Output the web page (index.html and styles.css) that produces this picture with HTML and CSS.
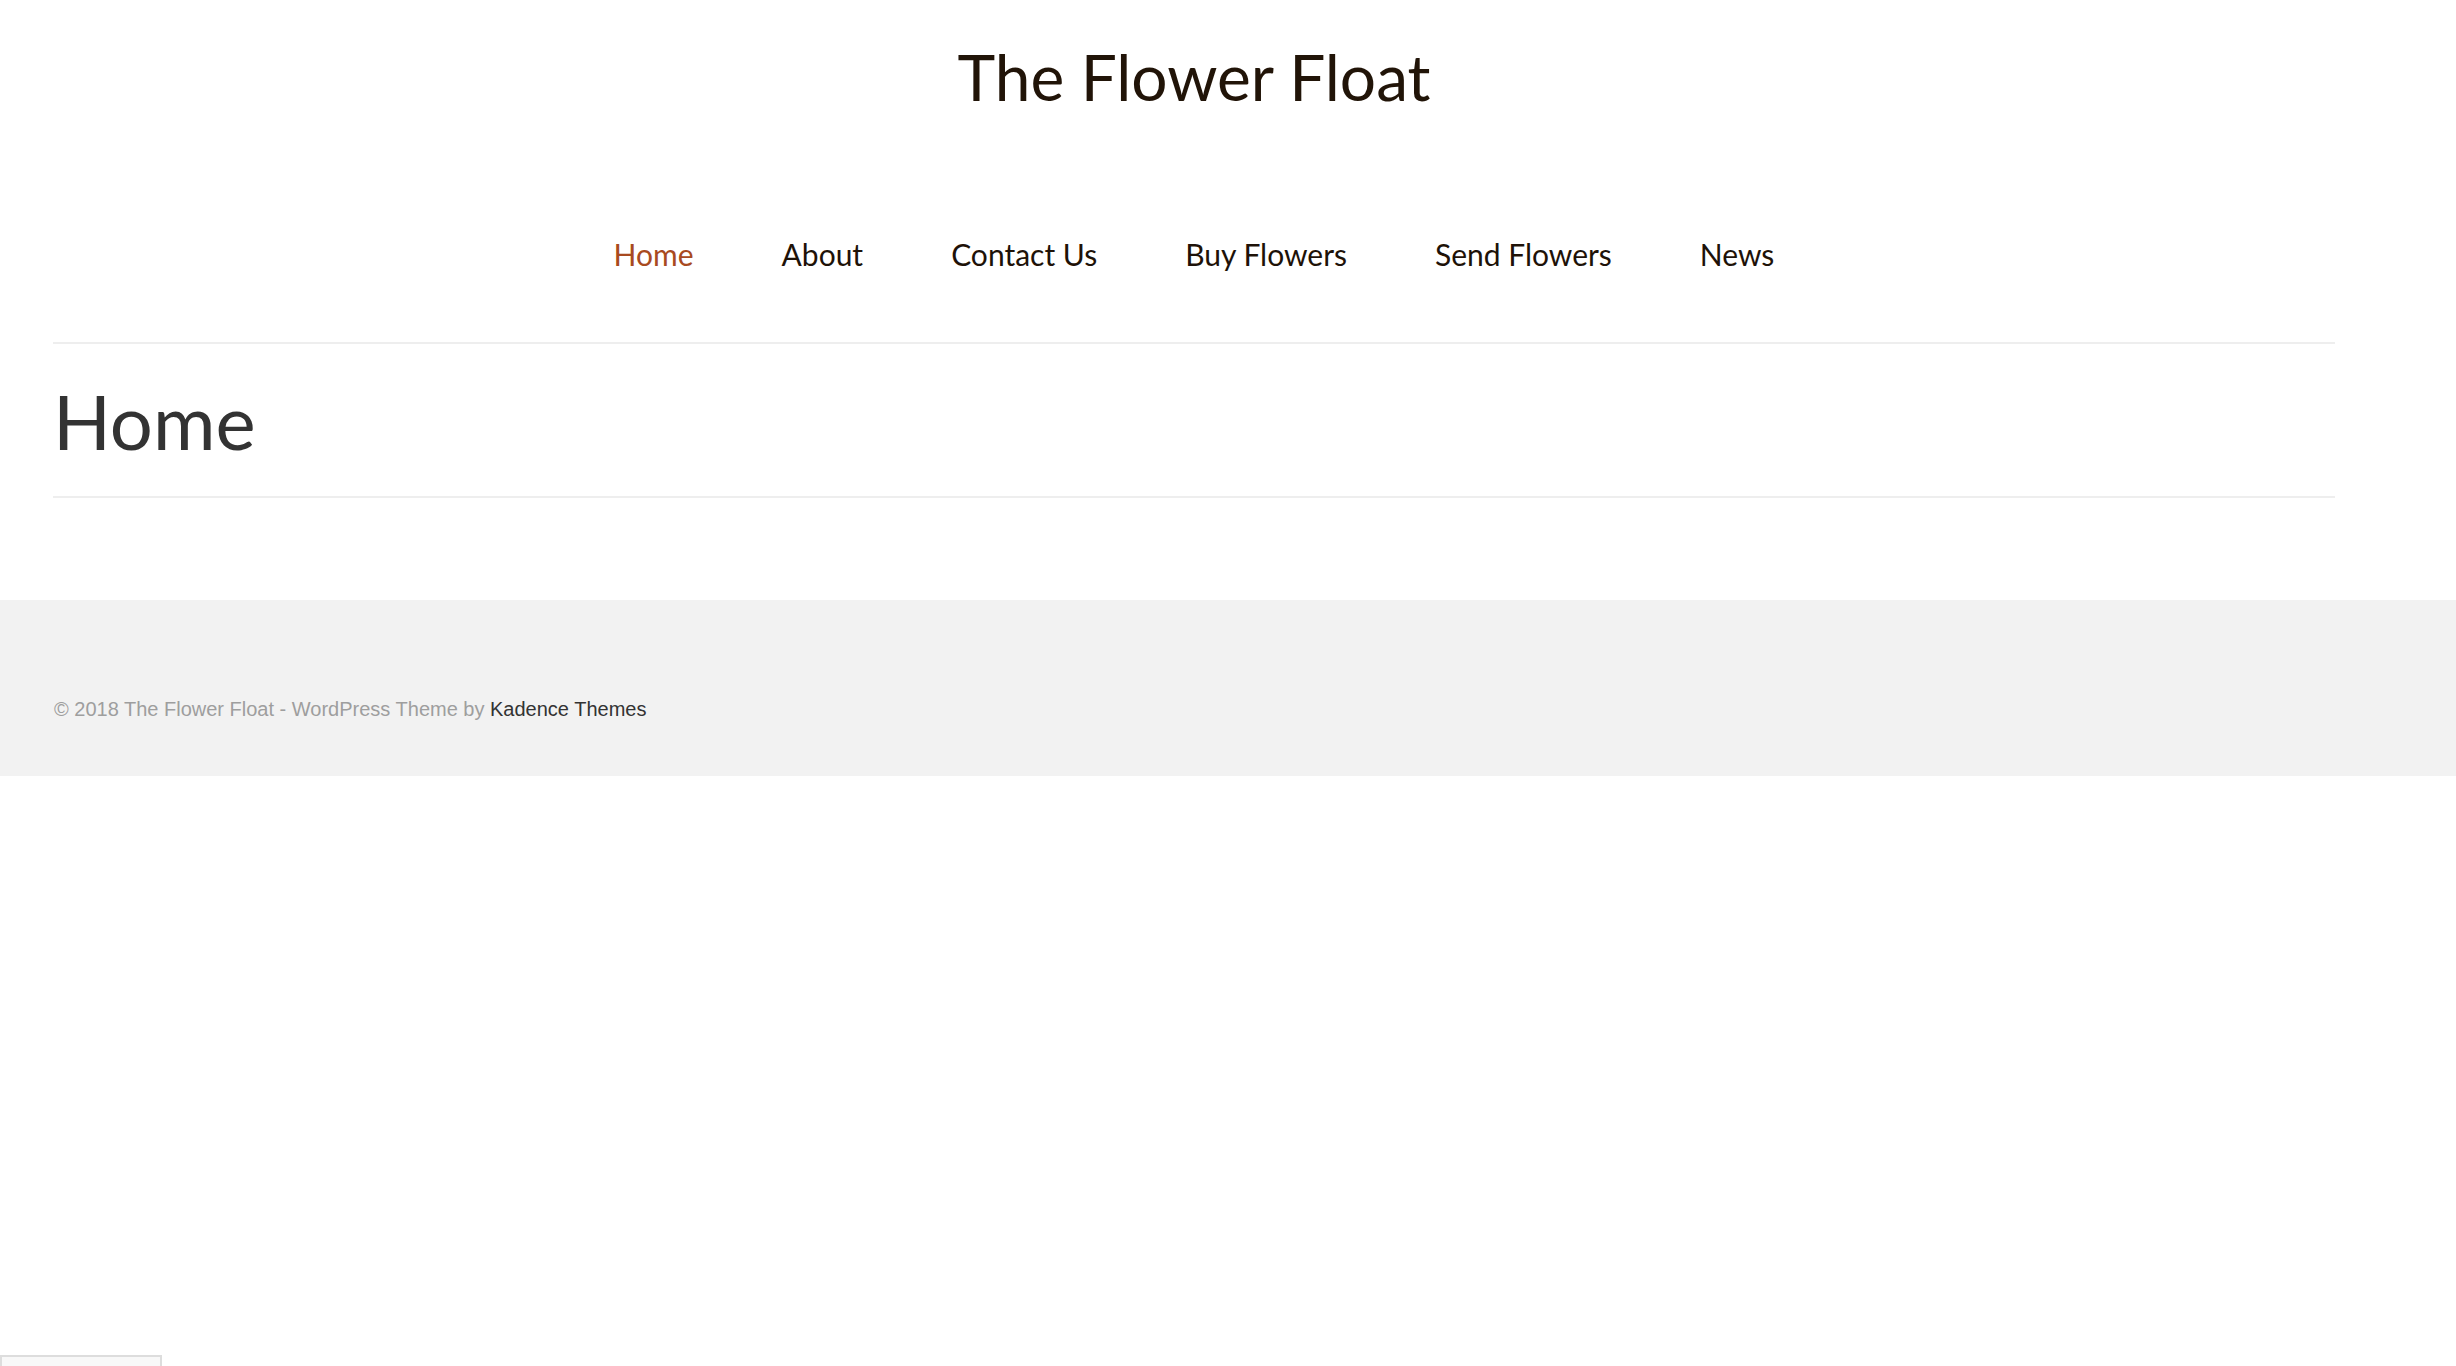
FILE: index.html
```html
<!DOCTYPE html>
<html lang="en">
<head>
<meta charset="utf-8">
<title>The Flower Float</title>
<link rel="stylesheet" href="styles.css">
</head>
<body>
<header class="site-header">
  <div class="container">
    <div class="site-title">The Flower Float</div>
    <nav class="main-nav">
      <a class="nav-item active" href="#">Home</a>
      <a class="nav-item" href="#">About</a>
      <a class="nav-item" href="#">Contact Us</a>
      <a class="nav-item" href="#">Buy Flowers</a>
      <a class="nav-item" href="#">Send Flowers</a>
      <a class="nav-item" href="#">News</a>
    </nav>
  </div>
</header>
<main class="container page-main">
  <div class="page-header">
    <h1 class="page-title">Home</h1>
  </div>
</main>
<footer class="site-footer">
  <div class="container">
    <p class="footer-credit">© 2018 The Flower Float - WordPress Theme by <a class="footer-link" href="#">Kadence Themes</a></p>
  </div>
</footer>
<div class="corner-badge"></div>
</body>
</html>
```

FILE: styles.css
```css
html, body {
  margin: 0;
  padding: 0;
  background: #ffffff;
}

body {
  font-family: Lato, "Liberation Sans", Arial, sans-serif;
  color: #1f1208;
}

.container {
  margin-left: 53px;
  width: 2282px;
}

.site-header {
  padding-top: 38px;
}

.site-title {
  font-family: Lato, sans-serif;
  font-size: 64px;
  line-height: 77px;
  text-align: center;
  color: #211408;
}

.main-nav {
  margin-top: 121px;
  display: flex;
  justify-content: center;
  gap: 88px;
  padding-bottom: 70px;
  border-bottom: 2px solid #eeeeee;
}

.nav-item {
  font-family: Lato, sans-serif;
  font-size: 30px;
  line-height: 36px;
  color: #1e1208;
  text-decoration: none;
}

.nav-item.active {
  color: #a84a20;
}

.page-main {
  padding-bottom: 102px;
}

.page-header {
  padding-top: 31px;
  padding-bottom: 30px;
  border-bottom: 2px solid #eeeeee;
}

.page-title {
  margin: 0;
  font-family: Lato, sans-serif;
  font-weight: 400;
  font-size: 76px;
  line-height: 91px;
  color: #333333;
}

.site-footer {
  background: #f2f2f2;
  padding-top: 97px;
  padding-bottom: 55px;
}

.footer-credit {
  margin: 0;
  padding-left: 1px;
  font-family: "Liberation Sans", Arial, sans-serif;
  font-size: 20px;
  line-height: 24px;
  color: #9e9e9e;
}

.footer-link {
  color: #333333;
  text-decoration: none;
}

.corner-badge {
  position: fixed;
  left: 0;
  bottom: -10px;
  width: 158px;
  height: 17px;
  border: 2px solid #dddddd;
  background: #f8f8f8;
}
```
